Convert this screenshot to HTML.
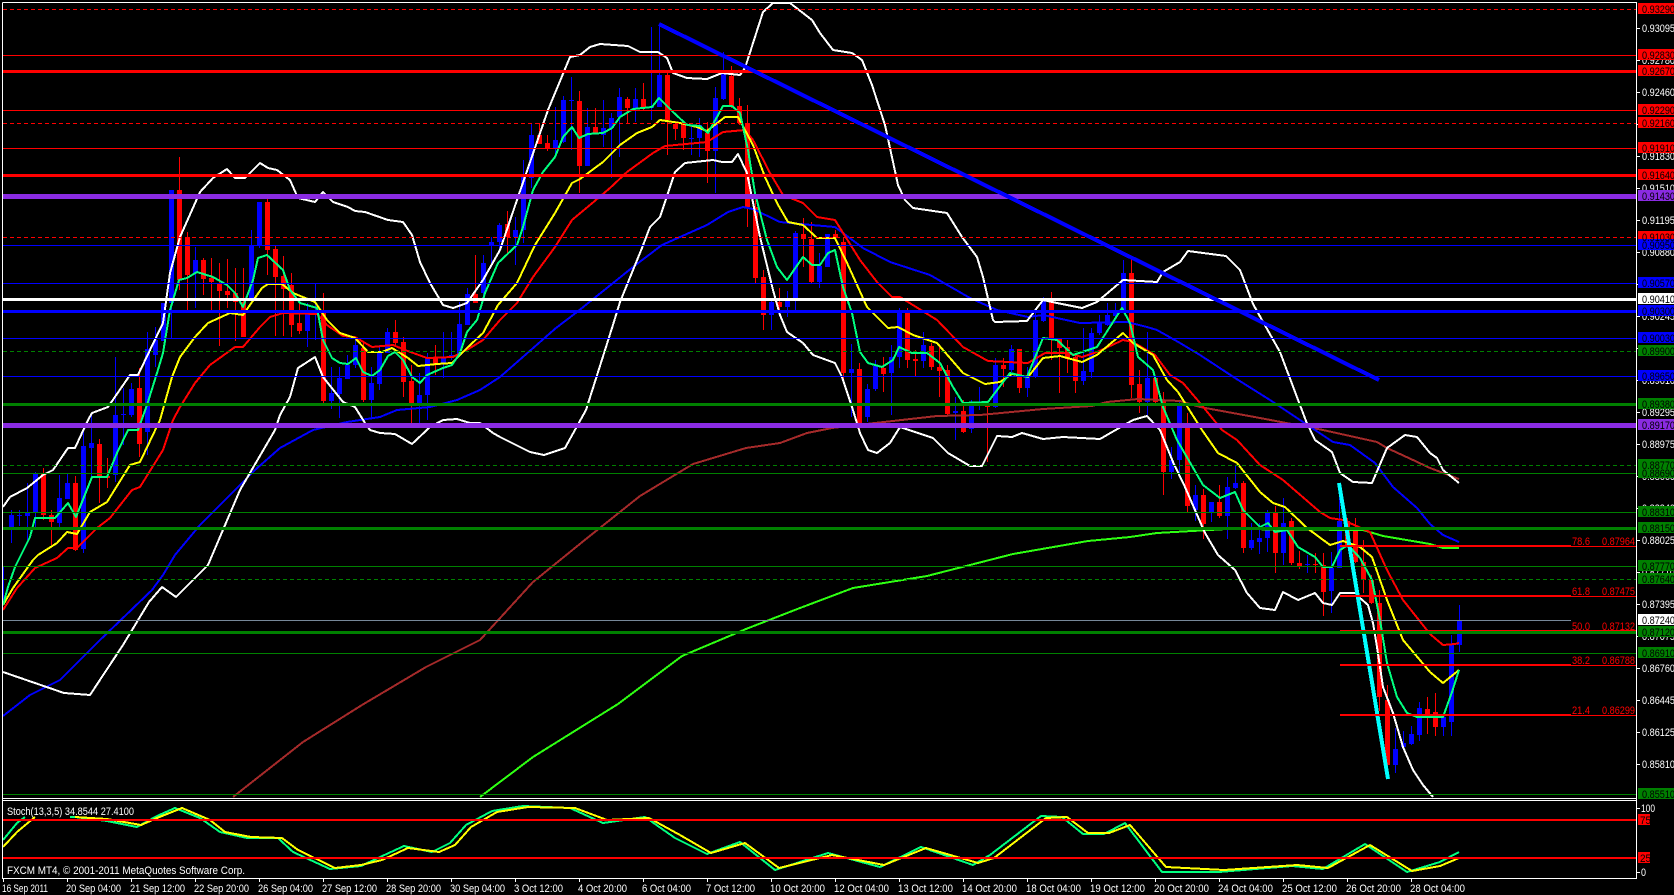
<!DOCTYPE html>
<html><head><meta charset="utf-8"><title>FXCM MT4 chart</title>
<style>
html,body{margin:0;padding:0;background:#000;width:1674px;height:895px;overflow:hidden}
svg{display:block}
text{font-family:"Liberation Sans",sans-serif;font-size:11px;fill:#fff}
.w{fill:none;stroke:#fff;stroke-width:2;stroke-linejoin:round}
.m{fill:none;stroke-width:2;stroke-linejoin:round}
.b{fill:#000}
</style></head><body>
<svg width="1674" height="895" viewBox="0 0 1674 895" xmlns="http://www.w3.org/2000/svg">
<defs>
<clipPath id="c1"><rect x="3" y="3" width="1633" height="795"/></clipPath>
<clipPath id="c2"><rect x="3" y="801" width="1633" height="77"/></clipPath>
</defs>
<rect width="1674" height="895" fill="#000"/>
<g clip-path="url(#c1)" shape-rendering="crispEdges">
<!-- blue candles -->
<path fill="none" stroke="#00f" stroke-width="1" d="M3.5 567V600M11.5 510V543M19.5 510V526M27.5 483V540M35.5 472V528M59.5 475V527M67.5 473V499M83.5 430V553M91.5 415V477M115.5 357V482M123.5 388V445M131.5 383V417M147.5 332V455M155.5 327V367M163.5 303V341M171.5 190V338M195.5 247V308M251.5 230V298M259.5 202V248M307.5 303V347M315.5 283V340M331.5 367V409M339.5 367V418M347.5 355V379M355.5 340V368M371.5 367V418M379.5 345V390M387.5 328V353M419.5 373V423M427.5 353V420M443.5 332V378M451.5 332V360M459.5 302V355M467.5 288V325M483.5 255V300M491.5 237V267M499.5 223V253M515.5 217V265M523.5 160V243M531.5 123V188M555.5 107V157M563.5 96V143M571.5 77V150M587.5 108V166M603.5 100V147M611.5 113V178M619.5 88V157M635.5 88V122M651.5 27V120M659.5 25V107M691.5 127V155M699.5 118V157M715.5 87V193M723.5 52V100M771.5 300V330M787.5 291V317M795.5 231V313M819.5 253V288M827.5 234V267M851.5 344V417M867.5 384V422M875.5 360V391M891.5 345V415M899.5 308V368M923.5 332V368M955.5 397V440M971.5 400V433M979.5 387V410M995.5 358V408M1011.5 345V372M1027.5 367V397M1035.5 308V378M1043.5 297V322M1083.5 328V385M1091.5 328V378M1099.5 315V335M1107.5 303V326M1115.5 303V318M1123.5 260V313M1147.5 332V415M1171.5 447V479M1179.5 400V475M1195.5 485V521M1211.5 502V522M1227.5 477V539M1235.5 465V489M1251.5 523V550M1259.5 523V554M1267.5 510V552M1283.5 498V565M1307.5 555V573M1331.5 552V613M1339.5 483V568M1395.5 728V773M1403.5 731V747M1411.5 726V745M1419.5 702V741M1443.5 716V736M1451.5 635V736M1459.5 605V652"/>
<path fill="none" stroke="#00f" stroke-width="5" d="M11.5 515V527M19.5 515V516M27.5 513V516M35.5 473V513M59.5 498V523M67.5 483V499M83.5 446V549M91.5 443V448M115.5 415V475M123.5 414V415M131.5 389V415M147.5 349V432M155.5 340V355M163.5 303V341M171.5 190V303M195.5 260V273M251.5 246V298M259.5 202V245M307.5 313V331M315.5 310V311M331.5 393V401M339.5 378V394M347.5 365V379M355.5 345V365M371.5 383V400M379.5 353V384M387.5 332V353M419.5 395V403M427.5 358V395M443.5 358V363M451.5 355V358M459.5 324V355M467.5 294V325M483.5 263V293M491.5 242V245M499.5 225V242M515.5 230V237M523.5 177V230M531.5 135V178M555.5 140V148M563.5 100V142M571.5 100V101M587.5 127V166M603.5 128V135M611.5 118V128M619.5 97V117M635.5 99V108M651.5 107V108M659.5 75V107M691.5 138V139M699.5 125V138M715.5 98V151M723.5 73V99M771.5 302V315M787.5 300V307M795.5 233V298M819.5 266V282M827.5 234V267M851.5 369V373M867.5 389V417M875.5 366V389M891.5 357V373M899.5 312V357M923.5 345V361M955.5 411V413M971.5 406V429M979.5 403V404M995.5 365V407M1011.5 349V370M1027.5 377V388M1035.5 320V377M1043.5 300V321M1083.5 371V381M1091.5 333V372M1099.5 323V333M1107.5 315V325M1115.5 312V316M1123.5 273V312M1147.5 378V402M1171.5 460V472M1179.5 403V460M1195.5 495V510M1211.5 502V512M1227.5 487V516M1235.5 483V488M1251.5 540V548M1259.5 538V542M1267.5 513V538M1283.5 523V553M1307.5 564V565M1331.5 568V591M1339.5 521V568M1395.5 749V765M1403.5 743V747M1411.5 734V744M1419.5 708V735M1443.5 717V727M1451.5 645V722M1459.5 620V645"/>
<!-- red candles -->
<path fill="none" stroke="#f00" stroke-width="1" d="M43.5 468V520M51.5 510V545M75.5 476V551M99.5 439V503M107.5 458V488M139.5 368V457M179.5 157V290M187.5 232V310M203.5 258V295M211.5 258V310M219.5 263V346M227.5 259V308M235.5 268V341M243.5 268V337M267.5 198V275M275.5 246V336M283.5 256V336M291.5 273V337M299.5 302V334M323.5 293V403M363.5 343V402M395.5 320V345M403.5 337V397M411.5 365V423M435.5 345V375M475.5 255V303M507.5 211V253M539.5 123V144M547.5 135V151M579.5 91V193M595.5 108V134M627.5 97V123M643.5 83V110M667.5 72V155M675.5 121V140M683.5 122V150M707.5 122V183M731.5 66V108M739.5 98V125M747.5 105V227M755.5 200V283M763.5 270V330M779.5 288V315M803.5 218V267M811.5 222V283M835.5 230V238M843.5 237V383M859.5 363V430M883.5 357V392M907.5 308V368M915.5 350V377M931.5 343V370M939.5 347V397M947.5 365V416M963.5 400V433M987.5 403V462M1003.5 358V387M1019.5 349V393M1051.5 292V360M1059.5 338V393M1067.5 340V373M1075.5 353V393M1131.5 258V398M1139.5 370V413M1155.5 376V403M1163.5 392V495M1187.5 413V513M1203.5 489V539M1219.5 485V518M1243.5 481V553M1275.5 506V573M1291.5 518V565M1299.5 551V569M1315.5 553V573M1323.5 553V616M1347.5 518V546M1355.5 518V563M1363.5 540V593M1371.5 575V604M1379.5 590V711M1387.5 685V767M1427.5 697V734M1435.5 693V736"/>
<path fill="none" stroke="#f00" stroke-width="5" d="M43.5 474V515M51.5 515V522M75.5 483V550M99.5 444V477M107.5 476V478M139.5 388V444M179.5 190V280M187.5 237V275M203.5 260V279M211.5 278V282M219.5 283V291M227.5 291V295M235.5 293V302M243.5 302V337M267.5 202V250M275.5 249V277M283.5 276V289M291.5 285V325M299.5 323V331M323.5 313V401M363.5 348V400M395.5 332V343M403.5 342V382M411.5 381V403M435.5 357V365M475.5 294V303M507.5 224V237M539.5 135V144M547.5 143V148M579.5 101V166M595.5 127V133M627.5 99V108M643.5 99V108M667.5 75V120M675.5 124V129M683.5 124V138M707.5 133V151M731.5 76V107M739.5 106V123M747.5 123V207M755.5 207V278M763.5 277V315M779.5 302V307M803.5 234V239M811.5 239V282M835.5 234V238M843.5 242V373M859.5 369V423M883.5 368V374M907.5 312V360M915.5 359V361M931.5 346V367M939.5 367V371M947.5 370V414M963.5 411V432M987.5 405V407M1003.5 365V369M1019.5 349V388M1051.5 301V338M1059.5 339V348M1067.5 347V359M1075.5 357V381M1131.5 273V385M1139.5 384V402M1155.5 378V402M1163.5 401V472M1187.5 427V506M1203.5 495V524M1219.5 502V516M1243.5 483V548M1275.5 513V553M1291.5 521V563M1299.5 563V567M1315.5 564V565M1323.5 565V592M1347.5 521V545M1355.5 531V562M1363.5 562V580M1371.5 580V603M1379.5 603V697M1387.5 700V765M1427.5 709V715M1435.5 712V727"/>
<!-- indicators -->
<polyline class="m" stroke="#a52a2a" points="233,797 303,742 362,705 426,667 480,640 533,582 586,539 640,496 693,464 746,448 780,443 807,433 832,428 875,423 937,416 980,415 1043,409 1092,406 1107,402 1138,399 1180,401 1200,407 1260,418 1323,430 1377,442 1387,448 1413,460 1430,468 1459,479"/>
<polyline class="m" stroke="#2eff12" points="480,797 533,757 618,704 682,656 746,629 800,608 853,588 927,576 1013,554 1088,541 1130,537 1157,533 1227,529 1363,530 1383,536 1430,544 1443,548 1459,548"/>
<polyline class="m" stroke="#00f" points="3,716 30,695 60,680 100,640 152,590 163,575 175,555 200,525 230,495 255,470 280,448 313,430 347,422 380,417 397,410 430,407 457,400 480,390 500,377 556,328 577,312 633,267 662,245 707,225 728,212 743,207 753,209 780,222 800,224 835,227 863,248 890,262 930,275 970,298 997,310 1028,317 1043,315 1080,323 1127,322 1147,327 1157,330 1180,343 1200,355 1235,378 1270,400 1315,430 1333,442 1350,445 1375,463 1393,487 1417,508 1430,524 1443,535 1459,542"/>
<polyline class="w" points="3,507 10,497 27,488 43,475 53,470 68,448 75,448 88,420 92,413 108,407 130,375 138,375 163,323 170,273 180,237 200,192 213,178 227,169 235,178 245,178 260,163 268,168 277,170 290,180 298,198 315,202 323,192 333,202 348,207 355,211 365,212 388,220 403,222 412,235 420,262 430,283 443,305 453,308 467,303 483,280 500,250 518,197 548,110 570,57 580,55 590,47 600,44 628,46 640,52 658,52 667,58 673,73 687,78 707,79 722,73 740,75 745,68 763,12 773,3 790,3 812,20 820,33 833,50 852,53 862,60 872,85 885,125 898,185 905,200 913,208 947,213 962,237 977,257 983,277 993,320 995,322 1027,321 1043,300 1057,303 1082,308 1097,302 1123,280 1157,282 1163,272 1180,262 1188,251 1226,256 1240,270 1253,304 1280,352 1306,421 1315,440 1332,452 1340,473 1353,482 1372,483 1387,448 1405,435 1417,437 1430,453 1437,458 1443,470 1459,483"/>
<polyline class="w" points="3,672 32,682 64,693 90,695 123,645 149,602 162,587 176,597 208,565 240,490 275,430 280,415 290,397 298,368 315,357 323,377 343,402 355,407 365,423 370,430 380,433 395,434 412,444 430,427 443,420 457,419 470,423 480,423 493,433 500,437 530,452 544,455 565,448 586,410 612,328 620,302 642,248 650,227 660,217 675,172 685,163 713,160 722,162 732,162 738,154 747,173 760,237 773,290 780,315 787,332 803,343 813,355 835,363 842,377 852,407 860,433 868,450 877,453 890,443 900,427 933,438 948,453 970,466 982,466 997,436 1012,437 1022,433 1043,439 1063,437 1100,439 1133,420 1147,416 1160,430 1173,462 1185,487 1205,533 1218,555 1235,570 1247,593 1260,608 1275,610 1283,592 1298,600 1315,593 1323,603 1332,605 1340,593 1357,593 1360,598 1368,605 1373,623 1377,647 1383,687 1393,713 1403,747 1413,770 1423,785 1433,797"/>
<polyline class="m" stroke="#f00" points="3,610 17,588 35,568 57,558 68,548 77,548 97,528 110,518 132,490 140,487 163,450 173,420 180,407 195,383 210,365 235,347 243,347 260,327 270,317 283,313 317,314 327,325 343,336 355,337 372,347 393,345 405,350 427,358 453,357 470,348 483,340 500,320 517,303 533,277 555,247 572,220 590,205 610,188 627,172 653,153 665,146 707,142 723,132 745,130 753,140 770,173 783,195 803,203 817,217 835,220 860,260 877,282 892,297 900,297 937,320 963,347 988,361 1028,363 1045,353 1067,353 1082,357 1097,352 1123,340 1133,342 1155,355 1170,375 1183,383 1200,403 1222,430 1237,440 1260,465 1283,480 1320,512 1330,518 1343,520 1370,532 1387,570 1403,600 1430,634 1443,645 1455,644 1459,643"/>
<polyline class="m" stroke="#ff0" points="3,605 13,588 33,560 38,555 57,543 67,532 77,534 90,512 107,502 130,465 140,462 160,420 172,377 180,357 195,337 208,323 230,313 243,315 252,302 262,288 268,284 282,284 293,293 315,302 327,320 340,333 355,338 368,352 382,352 392,348 408,358 418,366 437,364 452,363 467,348 483,333 498,305 517,283 535,245 555,213 572,183 580,179 603,162 620,145 637,133 652,127 660,120 680,123 697,127 707,131 725,117 738,117 753,145 765,177 777,203 788,222 803,225 817,238 835,238 848,265 867,307 888,328 898,327 913,335 937,343 963,373 985,384 1000,382 1012,374 1028,377 1043,358 1060,356 1082,362 1097,355 1123,333 1133,343 1153,355 1167,380 1178,392 1202,430 1218,453 1237,463 1260,492 1273,503 1285,507 1307,528 1330,545 1343,541 1360,547 1372,557 1387,600 1403,640 1430,672 1443,683 1459,670"/>
<polyline class="m" stroke="#00ff7f" points="3,605 8,587 15,567 30,537 35,518 55,518 68,503 76,517 92,477 107,477 117,453 128,430 138,430 147,405 157,373 163,353 170,310 179,280 187,278 197,272 213,277 227,285 235,293 243,307 253,280 258,258 267,255 283,270 290,290 300,303 317,308 323,340 332,358 340,363 348,364 356,358 363,372 372,376 380,370 388,356 395,352 403,360 412,377 420,383 427,375 443,368 452,365 460,353 467,332 477,320 485,293 498,263 517,245 523,227 533,190 543,172 555,157 563,137 572,127 579,138 588,134 603,133 612,128 620,117 633,109 652,107 659,98 673,112 687,125 700,126 708,133 717,117 723,106 732,106 740,113 748,150 755,193 767,240 777,267 787,280 803,257 812,265 820,265 828,253 835,250 843,287 852,313 860,352 868,363 882,367 893,360 899,347 912,353 927,353 940,363 953,387 963,403 988,402 1010,373 1027,377 1043,338 1057,340 1073,355 1097,347 1122,308 1130,323 1138,357 1153,370 1163,407 1177,440 1203,485 1220,498 1235,492 1243,510 1260,527 1268,523 1275,532 1287,530 1298,547 1315,557 1323,567 1332,567 1340,550 1348,545 1360,558 1372,580 1380,620 1387,663 1397,697 1407,713 1417,717 1430,717 1443,717 1452,692 1459,670"/>
<!-- horizontal lines thin -->
<path fill="none" stroke="#f00" stroke-width="1" d="M3 55.5H1636M3 110.5H1636M3 148.5H1636"/>
<path fill="none" stroke="#f00" stroke-width="1" stroke-dasharray="4,3" d="M3 9.5H1636M3 123.5H1636M3 237.5H1636"/>
<path fill="none" stroke="#00f" stroke-width="1" d="M3 245.5H1636M3 283.5H1636M3 338.5H1636M3 376.5H1636"/>
<path fill="none" stroke="#008000" stroke-width="1" d="M3 473.5H1636M3 512.5H1636M3 566.5H1636M3 653.5H1636M3 794.5H1636"/>
<path fill="none" stroke="#008000" stroke-width="1" stroke-dasharray="4,3" d="M3 351.5H1636M3 465.5H1636M3 579.5H1636"/>
<path fill="none" stroke="#778899" stroke-width="1" d="M3 620.5H1571"/>
<!-- cyan & fib -->
<path fill="none" stroke="#0ff" stroke-width="4" d="M1339 483L1388 779"/>
<path fill="none" stroke="#f00" stroke-width="1" d="M1571 546.5H1636M1571 596.5H1636M1340 630.5H1636M1571 665.5H1636M1571 715.5H1636"/>
<path fill="none" stroke="#f00" stroke-width="2" d="M1340 546H1571M1340 596H1571M1340 665H1571M1340 715H1571"/>
<!-- thick h lines -->
<path fill="none" stroke="#f00" stroke-width="3" d="M3 71.5H1636M3 175.5H1636"/>
<path fill="none" stroke="#8a2be2" stroke-width="5" d="M3 196.5H1636M3 425.5H1636"/>
<path fill="none" stroke="#fff" stroke-width="3" d="M3 299.5H1636"/>
<path fill="none" stroke="#00f" stroke-width="3" d="M3 311.5H1636"/>
<path fill="none" stroke="#008000" stroke-width="3" d="M3 404.5H1636M3 528.5H1636M3 632.5H1636"/>
<path fill="none" stroke="#00f" stroke-width="4" d="M659 24L1379 380"/>
</g>
<!-- stochastic -->
<g clip-path="url(#c2)" shape-rendering="crispEdges">
<path fill="none" stroke="#00ff7f" stroke-width="2" stroke-linejoin="round" d="M3 840L17 823L25 817M70 817L75 817L107 821L137 827L157 816L175 808L200 818L220 832L247 838L278 838L293 852L330 869L361 866L378 858L404 846L432 852L450 843L466 825L492 811L523 806L570 808L603 823L645 817L675 838L707 854L740 842L775 870L828 853L880 867L921 847L973 865L990 855L1041 816L1062 817L1083 834L1104 834L1125 823L1162 872L1219 872L1292 866L1323 869L1365 844L1407 872L1440 862L1459 852"/>
<path fill="none" stroke="#ff0" stroke-width="2" stroke-linejoin="round" d="M3 847L17 832L35 817M75 817L107 819L141 825L157 818L182 808L210 820L225 832L251 837L282 838L298 850L335 868L361 865L382 860L408 848L439 852L455 845L471 827L497 812L528 807L575 808L607 820L649 818L680 835L711 853L745 843L779 868L832 855L884 865L926 848L978 863L994 858L1046 818L1067 817L1088 833L1109 833L1130 825L1166 867L1224 870L1297 865L1328 868L1370 845L1412 871L1440 866L1459 858"/>
<path fill="none" stroke="#f00" stroke-width="2" d="M3 820H1636M3 858H1636"/>
</g>
<!-- frame -->
<g shape-rendering="crispEdges" fill="none" stroke="#fff" stroke-width="1">
<path d="M2.5 2.5H1636.5V878.5H2.5V2.5M2.5 798.5H1636.5M2.5 800.5H1636.5"/>
<path d="M1637 28.5h3M1637 60.5h3M1637 92.5h3M1637 124.5h3M1637 156.5h3M1637 188.5h3M1637 220.5h3M1637 252.5h3M1637 284.5h3M1637 316.5h3M1637 348.5h3M1637 380.5h3M1637 412.5h3M1637 444.5h3M1637 476.5h3M1637 508.5h3M1637 540.5h3M1637 572.5h3M1637 604.5h3M1637 636.5h3M1637 668.5h3M1637 700.5h3M1637 732.5h3M1637 764.5h3M1637 808.5h3M1637 872.5h3"/>
<path d="M3.5 879v3M67.5 879v3M131.5 879v3M195.5 879v3M259.5 879v3M323.5 879v3M387.5 879v3M451.5 879v3M515.5 879v3M579.5 879v3M643.5 879v3M707.5 879v3M771.5 879v3M835.5 879v3M899.5 879v3M963.5 879v3M1027.5 879v3M1091.5 879v3M1155.5 879v3M1219.5 879v3M1283.5 879v3M1347.5 879v3M1411.5 879v3"/>
</g>
<!-- price ticks -->
<g>
<text x="1642" y="32" textLength="33" lengthAdjust="spacingAndGlyphs">0.93095</text>
<text x="1642" y="64" textLength="33" lengthAdjust="spacingAndGlyphs">0.92780</text>
<text x="1642" y="96" textLength="33" lengthAdjust="spacingAndGlyphs">0.92460</text>
<text x="1642" y="160" textLength="33" lengthAdjust="spacingAndGlyphs">0.91830</text>
<text x="1642" y="192" textLength="33" lengthAdjust="spacingAndGlyphs">0.91510</text>
<text x="1642" y="224" textLength="33" lengthAdjust="spacingAndGlyphs">0.91195</text>
<text x="1642" y="256" textLength="33" lengthAdjust="spacingAndGlyphs">0.90880</text>
<text x="1642" y="320" textLength="33" lengthAdjust="spacingAndGlyphs">0.90245</text>
<text x="1642" y="384" textLength="33" lengthAdjust="spacingAndGlyphs">0.89610</text>
<text x="1642" y="416" textLength="33" lengthAdjust="spacingAndGlyphs">0.89295</text>
<text x="1642" y="448" textLength="33" lengthAdjust="spacingAndGlyphs">0.88975</text>
<text x="1642" y="480" textLength="33" lengthAdjust="spacingAndGlyphs">0.88660</text>
<text x="1642" y="512" textLength="33" lengthAdjust="spacingAndGlyphs">0.88340</text>
<text x="1642" y="544" textLength="33" lengthAdjust="spacingAndGlyphs">0.88025</text>
<text x="1642" y="576" textLength="33" lengthAdjust="spacingAndGlyphs">0.87710</text>
<text x="1642" y="608" textLength="33" lengthAdjust="spacingAndGlyphs">0.87395</text>
<text x="1642" y="640" textLength="33" lengthAdjust="spacingAndGlyphs">0.87075</text>
<text x="1642" y="672" textLength="33" lengthAdjust="spacingAndGlyphs">0.86760</text>
<text x="1642" y="704" textLength="33" lengthAdjust="spacingAndGlyphs">0.86445</text>
<text x="1642" y="736" textLength="33" lengthAdjust="spacingAndGlyphs">0.86125</text>
<text x="1642" y="768" textLength="33" lengthAdjust="spacingAndGlyphs">0.85810</text>
<text x="1641" y="812" textLength="14" lengthAdjust="spacingAndGlyphs">100</text>
<text x="1641" y="876" textLength="5" lengthAdjust="spacingAndGlyphs">0</text>
</g>
<!-- coloured price boxes -->
<g shape-rendering="crispEdges">
<g fill="#f00"><rect x="1638" y="3" width="36" height="11"/><rect x="1638" y="49" width="36" height="11"/><rect x="1638" y="65" width="36" height="11"/><rect x="1638" y="104" width="36" height="11"/><rect x="1638" y="117" width="36" height="11"/><rect x="1638" y="142" width="36" height="11"/><rect x="1638" y="169" width="36" height="11"/><rect x="1638" y="231" width="36" height="11"/><rect x="1638" y="814" width="12" height="11"/><rect x="1638" y="852" width="12" height="11"/></g>
<g fill="#8a2be2"><rect x="1638" y="190" width="36" height="11"/><rect x="1638" y="419" width="36" height="11"/></g>
<g fill="#00f"><rect x="1638" y="239" width="36" height="11"/><rect x="1638" y="277" width="36" height="11"/><rect x="1638" y="305" width="36" height="11"/><rect x="1638" y="332" width="36" height="11"/><rect x="1638" y="370" width="36" height="11"/></g>
<g fill="#008000"><rect x="1638" y="345" width="36" height="11"/><rect x="1638" y="398" width="36" height="11"/><rect x="1638" y="459" width="36" height="11"/><rect x="1638" y="467" width="36" height="11"/><rect x="1638" y="506" width="36" height="11"/><rect x="1638" y="522" width="36" height="11"/><rect x="1638" y="560" width="36" height="11"/><rect x="1638" y="573" width="36" height="11"/><rect x="1638" y="626" width="36" height="11"/><rect x="1638" y="647" width="36" height="11"/><rect x="1638" y="788" width="36" height="11"/></g>
<g fill="#fff"><rect x="1638" y="293" width="36" height="11"/><rect x="1638" y="614" width="36" height="11"/></g>
</g>
<g style="fill:#000">
<text class="b" x="1642" y="13" textLength="33" lengthAdjust="spacingAndGlyphs">0.93290</text>
<text class="b" x="1642" y="59" textLength="33" lengthAdjust="spacingAndGlyphs">0.92830</text>
<text class="b" x="1642" y="75" textLength="33" lengthAdjust="spacingAndGlyphs">0.92670</text>
<text class="b" x="1642" y="114" textLength="33" lengthAdjust="spacingAndGlyphs">0.92290</text>
<text class="b" x="1642" y="127" textLength="33" lengthAdjust="spacingAndGlyphs">0.92160</text>
<text class="b" x="1642" y="152" textLength="33" lengthAdjust="spacingAndGlyphs">0.91910</text>
<text class="b" x="1642" y="179" textLength="33" lengthAdjust="spacingAndGlyphs">0.91640</text>
<text class="b" x="1642" y="200" textLength="33" lengthAdjust="spacingAndGlyphs">0.91430</text>
<text class="b" x="1642" y="241" textLength="33" lengthAdjust="spacingAndGlyphs">0.91030</text>
<text class="b" x="1642" y="249" textLength="33" lengthAdjust="spacingAndGlyphs">0.90950</text>
<text class="b" x="1642" y="287" textLength="33" lengthAdjust="spacingAndGlyphs">0.90570</text>
<text class="b" x="1642" y="303" textLength="33" lengthAdjust="spacingAndGlyphs">0.90410</text>
<text class="b" x="1642" y="315" textLength="33" lengthAdjust="spacingAndGlyphs">0.90300</text>
<text class="b" x="1642" y="342" textLength="33" lengthAdjust="spacingAndGlyphs">0.90030</text>
<text class="b" x="1642" y="355" textLength="33" lengthAdjust="spacingAndGlyphs">0.89900</text>
<text class="b" x="1642" y="380" textLength="33" lengthAdjust="spacingAndGlyphs">0.89650</text>
<text class="b" x="1642" y="408" textLength="33" lengthAdjust="spacingAndGlyphs">0.89380</text>
<text class="b" x="1642" y="429" textLength="33" lengthAdjust="spacingAndGlyphs">0.89170</text>
<text class="b" x="1642" y="469" textLength="33" lengthAdjust="spacingAndGlyphs">0.88770</text>
<text class="b" x="1642" y="477" textLength="33" lengthAdjust="spacingAndGlyphs">0.88690</text>
<text class="b" x="1642" y="516" textLength="33" lengthAdjust="spacingAndGlyphs">0.88310</text>
<text class="b" x="1642" y="532" textLength="33" lengthAdjust="spacingAndGlyphs">0.88150</text>
<text class="b" x="1642" y="570" textLength="33" lengthAdjust="spacingAndGlyphs">0.87770</text>
<text class="b" x="1642" y="583" textLength="33" lengthAdjust="spacingAndGlyphs">0.87640</text>
<text class="b" x="1642" y="624" textLength="33" lengthAdjust="spacingAndGlyphs">0.87240</text>
<text class="b" x="1642" y="636" textLength="33" lengthAdjust="spacingAndGlyphs">0.87120</text>
<text class="b" x="1642" y="657" textLength="33" lengthAdjust="spacingAndGlyphs">0.86910</text>
<text class="b" x="1642" y="798" textLength="33" lengthAdjust="spacingAndGlyphs">0.85510</text>
<text class="b" x="1640" y="824" textLength="11" lengthAdjust="spacingAndGlyphs">75</text>
<text class="b" x="1640" y="862" textLength="11" lengthAdjust="spacingAndGlyphs">25</text>
</g>
<!-- fib labels -->
<g>
<text style="fill:#f00" x="1572" y="545" textLength="18" lengthAdjust="spacingAndGlyphs">78.6</text>
<text style="fill:#f00" x="1602" y="545" textLength="33" lengthAdjust="spacingAndGlyphs">0.87964</text>
<text style="fill:#f00" x="1572" y="595" textLength="18" lengthAdjust="spacingAndGlyphs">61.8</text>
<text style="fill:#f00" x="1602" y="595" textLength="33" lengthAdjust="spacingAndGlyphs">0.87475</text>
<text style="fill:#f00" x="1572" y="630" textLength="18" lengthAdjust="spacingAndGlyphs">50.0</text>
<text style="fill:#f00" x="1602" y="630" textLength="33" lengthAdjust="spacingAndGlyphs">0.87132</text>
<text style="fill:#f00" x="1572" y="664" textLength="18" lengthAdjust="spacingAndGlyphs">38.2</text>
<text style="fill:#f00" x="1602" y="664" textLength="33" lengthAdjust="spacingAndGlyphs">0.86788</text>
<text style="fill:#f00" x="1572" y="714" textLength="18" lengthAdjust="spacingAndGlyphs">21.4</text>
<text style="fill:#f00" x="1602" y="714" textLength="33" lengthAdjust="spacingAndGlyphs">0.86299</text>
</g>
<!-- window text -->
<text x="7" y="815" textLength="127" lengthAdjust="spacingAndGlyphs">Stoch(13,3,5) 34.8544 27.4100</text>
<text x="7" y="874" textLength="238" lengthAdjust="spacingAndGlyphs">FXCM MT4, © 2001-2011 MetaQuotes Software Corp.</text>
<!-- time axis -->
<g>
<text x="2" y="892" textLength="46" lengthAdjust="spacingAndGlyphs">16 Sep 2011</text>
<text x="66" y="892" textLength="55" lengthAdjust="spacingAndGlyphs">20 Sep 04:00</text>
<text x="130" y="892" textLength="55" lengthAdjust="spacingAndGlyphs">21 Sep 12:00</text>
<text x="194" y="892" textLength="55" lengthAdjust="spacingAndGlyphs">22 Sep 20:00</text>
<text x="258" y="892" textLength="55" lengthAdjust="spacingAndGlyphs">26 Sep 04:00</text>
<text x="322" y="892" textLength="55" lengthAdjust="spacingAndGlyphs">27 Sep 12:00</text>
<text x="386" y="892" textLength="55" lengthAdjust="spacingAndGlyphs">28 Sep 20:00</text>
<text x="450" y="892" textLength="55" lengthAdjust="spacingAndGlyphs">30 Sep 04:00</text>
<text x="514" y="892" textLength="49" lengthAdjust="spacingAndGlyphs">3 Oct 12:00</text>
<text x="578" y="892" textLength="49" lengthAdjust="spacingAndGlyphs">4 Oct 20:00</text>
<text x="642" y="892" textLength="49" lengthAdjust="spacingAndGlyphs">6 Oct 04:00</text>
<text x="706" y="892" textLength="49" lengthAdjust="spacingAndGlyphs">7 Oct 12:00</text>
<text x="770" y="892" textLength="55" lengthAdjust="spacingAndGlyphs">10 Oct 20:00</text>
<text x="834" y="892" textLength="55" lengthAdjust="spacingAndGlyphs">12 Oct 04:00</text>
<text x="898" y="892" textLength="55" lengthAdjust="spacingAndGlyphs">13 Oct 12:00</text>
<text x="962" y="892" textLength="55" lengthAdjust="spacingAndGlyphs">14 Oct 20:00</text>
<text x="1026" y="892" textLength="55" lengthAdjust="spacingAndGlyphs">18 Oct 04:00</text>
<text x="1090" y="892" textLength="55" lengthAdjust="spacingAndGlyphs">19 Oct 12:00</text>
<text x="1154" y="892" textLength="55" lengthAdjust="spacingAndGlyphs">20 Oct 20:00</text>
<text x="1218" y="892" textLength="55" lengthAdjust="spacingAndGlyphs">24 Oct 04:00</text>
<text x="1282" y="892" textLength="55" lengthAdjust="spacingAndGlyphs">25 Oct 12:00</text>
<text x="1346" y="892" textLength="55" lengthAdjust="spacingAndGlyphs">26 Oct 20:00</text>
<text x="1410" y="892" textLength="55" lengthAdjust="spacingAndGlyphs">28 Oct 04:00</text>
</g>
</svg>
</body></html>
